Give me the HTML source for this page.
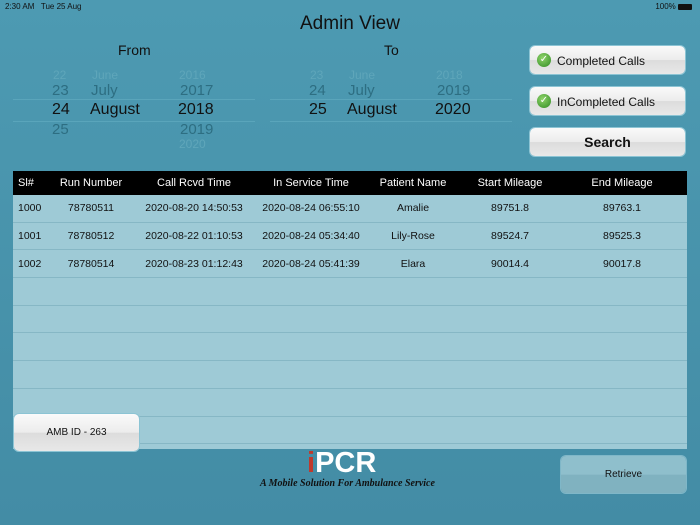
<!DOCTYPE html><html><head><style>
body{margin:0;width:700px;height:525px;overflow:hidden;background:linear-gradient(#4d9ab2,#438ca5);font-family:"Liberation Sans",sans-serif;position:relative}
.a{position:absolute}
.pk{font-size:15px;color:#2d6e82}
.fd{font-size:12px;color:#5fa6ba}
.sel{font-size:16px;color:#111}
.btn{position:absolute;border-radius:5px;background:linear-gradient(#fafafa 0%,#ececec 50%,#dcdcdc 51%,#e8e8e8 100%);box-shadow:0 0 0 1px #8cc4d4;font-size:12px;color:#111}
.chk{position:absolute;left:7px;top:7px;width:14px;height:14px;border-radius:50%;background:radial-gradient(circle at 40% 35%,#8fd46a,#2f8a22);color:#fff;font-size:10px;text-align:center;line-height:14px}
table{border-collapse:collapse;font-size:10.5px;color:#111;table-layout:fixed}
td{height:26.7px;border-bottom:1px solid #86b7c5;text-align:center;padding:0;white-space:nowrap;overflow:visible}
</style></head><body>
<div class="a" style="left:5px;top:2px;font-size:8px;color:#111">2:30 AM&nbsp;&nbsp; Tue 25 Aug</div>
<div class="a" style="right:8px;top:2px;font-size:8px;color:#111">100% <span style="display:inline-block;width:14px;height:6px;background:#111;border-radius:1px;vertical-align:middle"></span></div>
<div class="a" style="left:0;width:700px;top:13px;text-align:center;font-size:19px;color:#111">Admin View</div>
<div class="a" style="left:118px;top:42px;font-size:14px;color:#111">From</div>
<div class="a" style="left:384px;top:42px;font-size:14px;color:#111">To</div>
<div class="a" style="left:13px;top:99px;width:242px;height:21px;border-top:1px solid #5aa5bb;border-bottom:1px solid #5aa5bb"></div>
<div class="a" style="left:270px;top:99px;width:242px;height:21px;border-top:1px solid #5aa5bb;border-bottom:1px solid #5aa5bb"></div>
<div class="a fd" style="left:53px;top:68px">22</div><div class="a fd" style="left:92px;top:68px">June</div><div class="a fd" style="left:179px;top:68px">2016</div>
<div class="a fd" style="left:310px;top:68px">23</div><div class="a fd" style="left:349px;top:68px">June</div><div class="a fd" style="left:436px;top:68px">2018</div>
<div class="a fd" style="left:179px;top:137px">2020</div>
<div class="a pk" style="left:52px;top:82px">23</div><div class="a pk" style="left:91px;top:82px">July</div><div class="a pk" style="left:180px;top:82px">2017</div>
<div class="a sel" style="left:52px;top:101px">24</div><div class="a sel" style="left:90px;top:101px">August</div><div class="a sel" style="left:178px;top:101px">2018</div>
<div class="a pk" style="left:52px;top:121px">25</div><div class="a pk" style="left:180px;top:121px">2019</div>
<div class="a pk" style="left:309px;top:82px">24</div><div class="a pk" style="left:348px;top:82px">July</div><div class="a pk" style="left:437px;top:82px">2019</div>
<div class="a sel" style="left:309px;top:101px">25</div><div class="a sel" style="left:347px;top:101px">August</div><div class="a sel" style="left:435px;top:101px">2020</div>
<div class="btn" style="left:530px;top:46px;width:155px;height:28px"><div class="chk">✓</div><span class="a" style="left:27px;top:8px">Completed Calls</span></div>
<div class="btn" style="left:530px;top:87px;width:155px;height:28px"><div class="chk">✓</div><span class="a" style="left:27px;top:8px">InCompleted Calls</span></div>
<div class="btn" style="left:530px;top:128px;width:155px;height:28px;font-size:14px;font-weight:bold;text-align:center;line-height:28px">Search</div>
<div class="a" style="left:13px;top:171px;width:674px;height:278px;background:#9ecad6;overflow:hidden">
<table style="width:674px">
<colgroup><col style="width:40px"><col style="width:76px"><col style="width:130px"><col style="width:104px"><col style="width:100px"><col style="width:94px"><col style="width:130px"></colgroup>
<tr style="background:#000;color:#fff;font-size:11px"><td style="height:24px;border:0;text-align:left;padding-left:5px">Sl#</td><td style="border:0;height:24px">Run Number</td><td style="border:0;height:24px">Call Rcvd Time</td><td style="border:0;height:24px">In Service Time</td><td style="border:0;height:24px">Patient Name</td><td style="border:0;height:24px">Start Mileage</td><td style="border:0;height:24px">End Mileage</td></tr>
<tr><td style="text-align:left;padding-left:5px">1000</td><td>78780511</td><td>2020-08-20 14:50:53</td><td>2020-08-24 06:55:10</td><td>Amalie</td><td>89751.8</td><td>89763.1</td></tr>
<tr><td style="text-align:left;padding-left:5px">1001</td><td>78780512</td><td>2020-08-22 01:10:53</td><td>2020-08-24 05:34:40</td><td>Lily-Rose</td><td>89524.7</td><td>89525.3</td></tr>
<tr><td style="text-align:left;padding-left:5px">1002</td><td>78780514</td><td>2020-08-23 01:12:43</td><td>2020-08-24 05:41:39</td><td>Elara</td><td>90014.4</td><td>90017.8</td></tr>
<tr><td colspan="7"></td></tr><tr><td colspan="7"></td></tr><tr><td colspan="7"></td></tr><tr><td colspan="7"></td></tr><tr><td colspan="7"></td></tr><tr><td colspan="7"></td></tr>
</table></div>
<div class="btn" style="left:14px;top:414px;width:125px;height:37px;font-size:10px;text-align:center;line-height:37px">AMB ID - 263</div>
<div class="a" style="left:307px;top:447px;font-size:29px;font-weight:bold;color:#fff"><span style="color:#c0392b">i</span>PCR</div>
<div class="a" style="left:260px;top:478px;font-size:10px;font-style:italic;font-weight:bold;font-family:'Liberation Serif',serif;color:#111">A Mobile Solution For Ambulance Service</div>
<div class="a" style="left:561px;top:456px;width:125px;height:37px;border-radius:5px;background:linear-gradient(#8fbfcc 50%,#80b2c0 51%);box-shadow:0 0 0 1px #7fb7c8;font-size:10px;color:#111;text-align:center;line-height:37px">Retrieve</div>
</body></html>
